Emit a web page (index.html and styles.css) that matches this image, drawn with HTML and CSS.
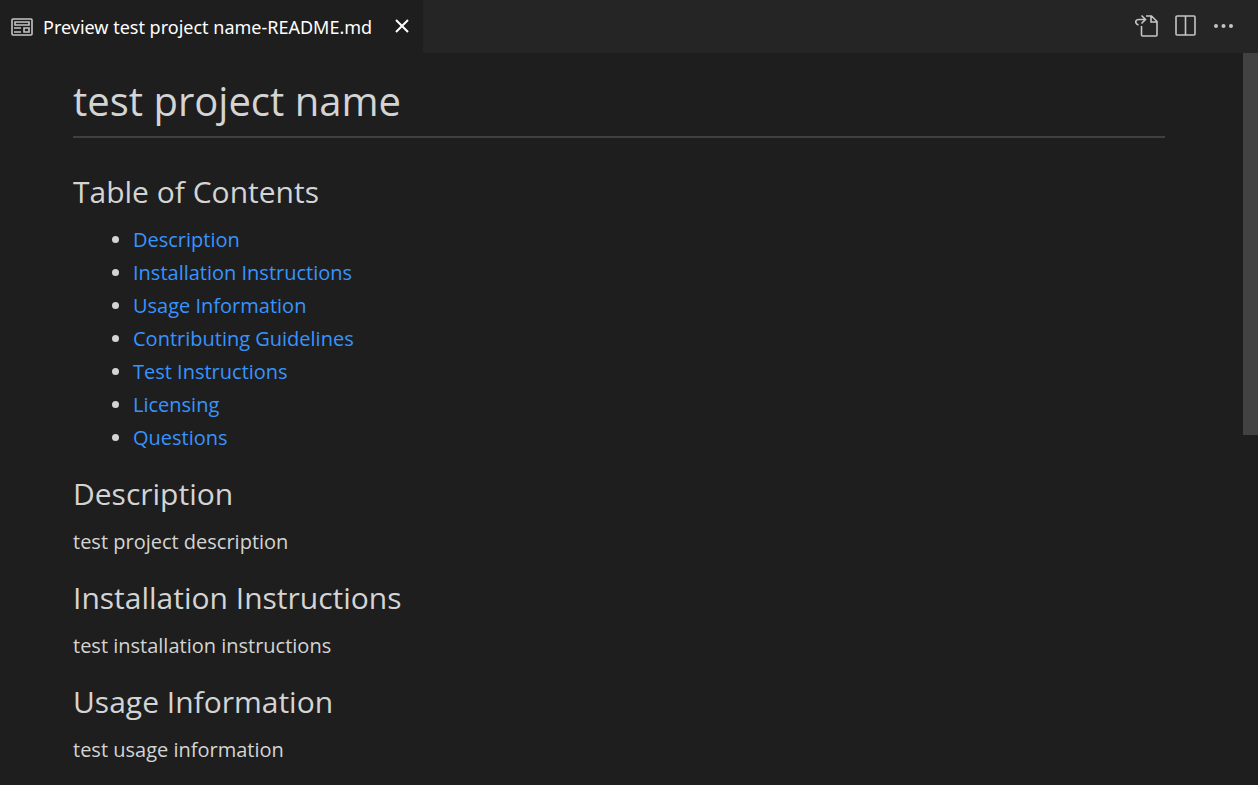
FILE: index.html
```html
<!DOCTYPE html>
<html lang="en">
<head>
<meta charset="utf-8">
<title>Preview test project name-README.md</title>
<link rel="stylesheet" href="styles.css">
</head>
<body>
<header class="tabbar">
  <div class="tab">
    <svg class="tab-icon" viewBox="0 0 22 18" aria-hidden="true">
      <rect x="1" y="1" width="20" height="16" rx="1"/>
      <path d="M4 4h14v3H4zM13 10h5v4h-5zM3 10h7M3 14h7"/>
    </svg>
    <span class="tab-title">Preview test project name-README.md</span>
    <button class="icon-button close" aria-label="Close">
      <svg width="16" height="16" viewBox="0 0 16 16"><path d="M2 1l12 12M14 1L2 13"/></svg>
    </button>
  </div>
  <div class="actions">
    <button class="icon-button" aria-label="Show source">
      <svg width="24" height="24" viewBox="0 0 24 24"><path d="M6.500 12v9q0 1 1 1H21q1 0 1-1V7.500L16.500 2H11M16 2v6h6M3.500 11C-.5 9.500 0 5.500 4 5.500h6M6.500 1.500l4 4-4 4"/></svg>
    </button>
    <button class="icon-button" aria-label="Split editor">
      <svg width="22" height="22" viewBox="0 0 22 22"><path d="M1.500 1h17.500q1 0 1 1v17q0 1-1 1h-17q-1 0-1-1V2q0-1 1-1zM10.500 1v19"/></svg>
    </button>
    <button class="icon-button more" aria-label="More actions">
      <svg width="22" height="22" viewBox="0 0 22 22"><circle cx="3" cy="11" r="2"/><circle cx="10.500" cy="11" r="2"/><circle cx="18" cy="11" r="2"/></svg>
    </button>
  </div>
</header>
<div class="viewport">
  <main class="preview">
    <h1>test project name</h1>
    <h2>Table of Contents</h2>
    <ul>
      <li><a href="#description">Description</a></li>
      <li><a href="#installation">Installation Instructions</a></li>
      <li><a href="#usage">Usage Information</a></li>
      <li><a href="#contributing">Contributing Guidelines</a></li>
      <li><a href="#tests">Test Instructions</a></li>
      <li><a href="#licensing">Licensing</a></li>
      <li><a href="#questions">Questions</a></li>
    </ul>
    <h2 id="description">Description</h2>
    <p>test project description</p>
    <h2 id="installation">Installation Instructions</h2>
    <p>test installation instructions</p>
    <h2 id="usage">Usage Information</h2>
    <p>test usage information</p>
  </main>
  <div class="scrollbar"><div class="thumb"></div></div>
</div>
</body>
</html>
```
FILE: styles.css
```css
* { box-sizing: border-box; }
body {
  margin: 0;
  height: 100vh;
  display: flex;
  flex-direction: column;
  overflow: hidden;
  background: #1e1e1e;
  color: #d4d4d4;
  font-family: "Open Sans", "Noto Sans", sans-serif;
  font-size: 20px;
}
.tabbar {
  display: flex;
  justify-content: space-between;
  height: 53px;
  flex: none;
  background: #252526;
}
.tab {
  display: flex;
  align-items: center;
  padding: 0 13px 0 11px;
  background: #1e1e1e;
  color: #fff;
  font-family: "Noto Sans", "Open Sans", sans-serif;
  font-size: 18px;
}
.tab-icon { width: 22px; height: 18px; margin-right: 10px; }
.tab-icon, .actions svg { stroke-width: 1.6; }
.tab-title { white-space: nowrap; }
svg { display: block; fill: none; stroke: #c5c5c5; stroke-width: 2; }
.icon-button {
  padding: 0;
  border: 0;
  background: none;
  cursor: pointer;
}
.close { margin-left: 22px; }
.close svg { stroke: #fff; }
.actions {
  display: flex;
  align-items: center;
  gap: 16px;
  padding: 0 23px 1px 0;
}
.more svg { fill: #c5c5c5; stroke: none; }
.viewport {
  flex: 1;
  min-height: 0;
  display: flex;
}
.preview {
  flex: 1;
  min-width: 0;
  padding: 20px 78px 0 73px;
  overflow: hidden;
}
h1, h2 { font-weight: 400; }
h1 {
  margin: 0 0 35px;
  padding-bottom: 7px;
  border-bottom: 2px solid #404040;
  font-size: 40px;
  line-height: 56px;
}
h2 {
  margin: 0 0 12px;
  font-size: 30px;
  line-height: 38px;
}
ul { margin: 0 0 21px; padding-left: 60px; line-height: 33px; }
p { margin: 0 0 21px; line-height: 33px; }
a { color: #3794ff; text-decoration: none; }
.scrollbar { width: 15px; flex: none; }
.thumb { height: 52.2%; background: #424242; }
```
